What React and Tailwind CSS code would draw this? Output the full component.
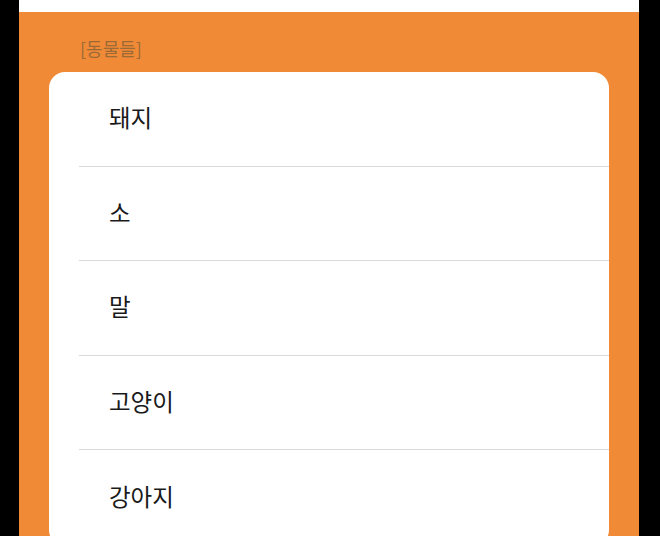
const animals = ["돼지", "소", "말", "고양이", "강아지"];

export default function App() {
  return (
    <div
      className="h-[536px] w-[660px] overflow-hidden bg-black"
      style={{ fontFamily: '"Noto Sans CJK KR", "Noto Sans", sans-serif' }}
    >
      <div className="ml-[19px] flex h-full w-[620px] flex-col">
        <div className="h-[12px] shrink-0 bg-white" />
        <div className="flex-1 bg-[#f08a37] px-[30px]">
          <div className="pl-[31px] pt-[23px] pb-[10px] text-[18px] leading-[27px] text-[#9b6a36]">
            [동물들]
          </div>
          <div className="h-[474px] rounded-[16px] bg-white pl-[30px]">
            {animals.map((name, i) => (
              <div
                key={name}
                className={
                  "flex h-[94.6px] items-center pb-[2px] pl-[30px] text-[23.5px] text-[#1a1a1a] " +
                  (i < animals.length - 1 ? "border-b border-[#d9d9d9]" : "")
                }
              >
                {name}
              </div>
            ))}
          </div>
        </div>
      </div>
    </div>
  );
}
